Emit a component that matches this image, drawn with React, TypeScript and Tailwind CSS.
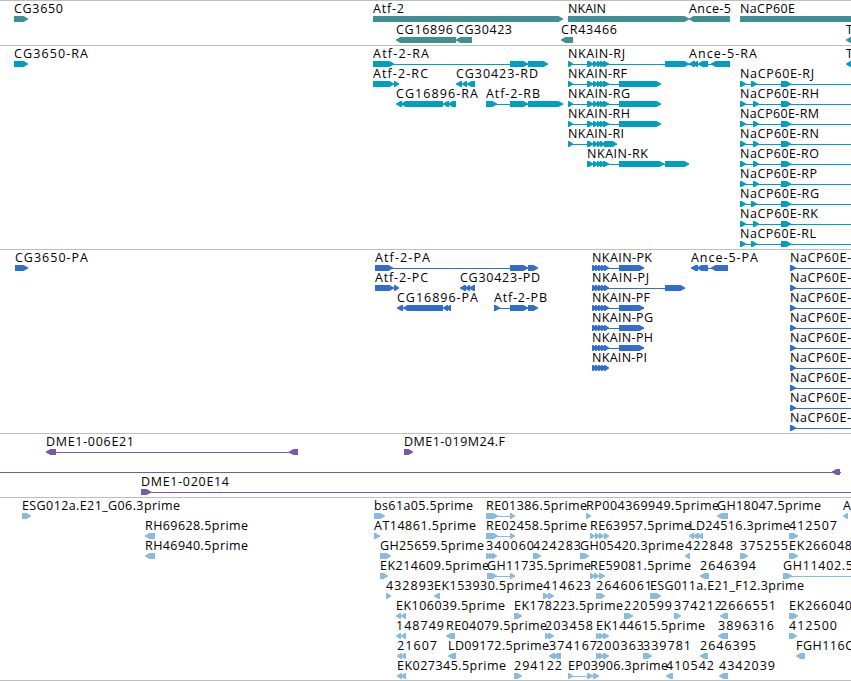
type Part = [start: number, end: number];

type Feature = {
  row: number;
  name?: string;
  textEnd?: number;
  reverse?: boolean;
  parts: Part[];
  // thin connector drawn behind the parts
  line?: Part;
};

type Track = {
  id: string;
  height: number;
  pitch: number;
  color: string;
  features: Feature[];
};

const VIEW_END = 851;
const TIP = 4.5;

const fwd = (row: number, name: string, textEnd: number, parts: Part[], line?: Part): Feature => ({
  row,
  name,
  textEnd,
  parts,
  line,
});

const rev = (row: number, name: string, textEnd: number, parts: Part[], line?: Part): Feature => ({
  row,
  name,
  textEnd,
  parts,
  line,
  reverse: true,
});

const genes: Feature[] = [
  fwd(0, "CG3650", 63, [[14, 28]]),
  fwd(0, "Atf-2", 404, [[373, 563]]),
  fwd(0, "NKAIN", 606, [[568, 689]]),
  rev(0, "Ance-5", 731, [[689, 730]]),
  fwd(0, "NaCP60E", 795, [[740, 870]]),
  rev(1, "CG16896", 453, [[396, 456]]),
  rev(1, "CG30423", 512, [[456, 472]]),
  rev(1, "CR43466", 617, [[561, 573]]),
  rev(1, "T", 853, [[846, 870]]),
];

// shared short exons of the NKAIN transcripts
const nkainExons: Part[] = [[587, 593.5], [593, 598.5], [597, 602], [600, 605], [603, 609]];

const nacpTranscripts: [string, number, number][] = [
  ["NaCP60E-RJ", 814, 751],
  ["NaCP60E-RH", 819, 753],
  ["NaCP60E-RM", 819, 753],
  ["NaCP60E-RN", 819, 753],
  ["NaCP60E-RO", 819, 753],
  ["NaCP60E-RP", 817, 753],
  ["NaCP60E-RG", 819, 751],
  ["NaCP60E-RK", 818, 753],
  ["NaCP60E-RL", 816, 751],
];

const transcripts: Feature[] = [
  fwd(0, "CG3650-RA", 88, [[14, 28]]),
  fwd(0, "Atf-2-RA", 429, [[373, 394], [510, 528], [528, 548]], [373, 548]),
  fwd(0, "NKAIN-RJ", 625, [[568, 573], ...nkainExons, [665, 689]], [568, 689]),
  rev(0, "Ance-5-RA", 757, [[689, 695], [693, 698], [698, 708], [711, 730]], [689, 730]),
  rev(0, "T", 853, [[846, 870]]),
  fwd(1, "Atf-2-RC", 428, [[373, 394], [394, 399]], [373, 399]),
  rev(1, "CG30423-RD", 538, [[456, 462], [462, 467], [467, 475]]),
  fwd(1, "NKAIN-RF", 627, [[568, 573], ...nkainExons, [619, 661]], [568, 661]),
  rev(2, "CG16896-RA", 478, [[396, 402], [401, 443], [443, 449], [448, 456]]),
  fwd(2, "Atf-2-RB", 540, [[486, 497], [510, 528], [528, 563]], [486, 563]),
  fwd(2, "NKAIN-RG", 630, [[568, 573], ...nkainExons, [619, 661]], [568, 661]),
  fwd(3, "NKAIN-RH", 630, [[568, 573], ...nkainExons, [619, 661]], [568, 661]),
  fwd(4, "NKAIN-RI", 624, [[568, 573], ...nkainExons.slice(0, 4), [604, 617]], [568, 617]),
  fwd(5, "NKAIN-RK", 648, [...nkainExons, [619, 664], [665, 689]], [587, 689]),
  ...nacpTranscripts.map(([name, textEnd, exon], i) =>
    fwd(i + 1, name, textEnd, [[740, 746], [exon, exon + 6], [781, 791]], [740, VIEW_END])
  ),
];

const nkainCds: Part[] = [[592, 597], [595, 600], [598, 603], [601, 606], [604, 609]];

const proteins: Feature[] = [
  fwd(0, "CG3650-PA", 88, [[15, 28]]),
  fwd(0, "Atf-2-PA", 430, [[375, 393], [510, 528], [528, 538]], [375, 538]),
  fwd(0, "NKAIN-PK", 652, [...nkainCds, [619, 644]], [592, 644]),
  rev(0, "Ance-5-PA", 758, [[691, 698], [697, 708], [711, 728]], [691, 728]),
  fwd(1, "Atf-2-PC", 428, [[375, 394], [394, 399]]),
  rev(1, "CG30423-PD", 540, [[460, 466], [465, 470], [469, 475]]),
  fwd(1, "NKAIN-PJ", 649, [...nkainCds, [665, 685]], [592, 685]),
  rev(2, "CG16896-PA", 478, [[397, 403], [403, 443], [443, 448], [446, 451]]),
  fwd(2, "Atf-2-PB", 547, [[494, 500], [510, 528], [528, 538]], [494, 538]),
  fwd(2, "NKAIN-PF", 650, [...nkainCds, [619, 644]], [592, 644]),
  fwd(3, "NKAIN-PG", 653, [...nkainCds, [619, 644]], [592, 644]),
  fwd(4, "NKAIN-PH", 653, [...nkainCds, [619, 644]], [592, 644]),
  fwd(5, "NKAIN-PI", 647, nkainCds),
  ...Array.from({ length: 9 }, (_, i) => fwd(i, "NaCP60E-", 851, [[790, 796]], [790, VIEW_END])),
];

const clones: Feature[] = [
  rev(0, "DME1-006E21", 134, [[46, 56], [289, 298]], [46, 298]),
  fwd(0, "DME1-019M24.F", 505, [[404, 413]]),
  { row: 1, parts: [[832, 840]], line: [0, 841], reverse: true },
  fwd(2, "DME1-020E14", 229, [[141, 151]], [141, VIEW_END]),
];

const ests: Feature[] = [
  fwd(0, "ESG012a.E21_G06.3prime", 180, [[22, 31]]),
  fwd(0, "bs61a05.5prime", 473, [[374, 385]]),
  fwd(0, "RE01386.5prime", 587, [[486, 498], [510, 515]], [486, 515]),
  fwd(0, "RP004369949.5prime", 719, [[586, 591]]),
  rev(0, "GH18047.5prime", 821, [[717, 728]]),
  rev(0, "A", 852, [[843, 848]]),

  rev(1, "RH69628.5prime", 248, [[145, 155]]),
  fwd(1, "AT14861.5prime", 476, [[374, 380]]),
  fwd(1, "RE02458.5prime", 587, [[486, 498], [510, 515]], [486, 515]),
  fwd(1, "RE63957.5prime", 691, [[590, 595], [595, 600], [599, 604], [604, 609]]),
  rev(1, "LD24516.3prime", 790, [[689, 694], [693, 699], [698, 703]]),
  fwd(1, "412507", 837, [[789, 798]]),

  rev(2, "RH46940.5prime", 248, [[145, 155]]),
  fwd(2, "GH25659.5prime", 484, [[380, 391]]),
  fwd(2, "340060", 534, [[486, 491], [489, 494], [492, 497]]),
  fwd(2, "424283", 581, [[533, 541]]),
  fwd(2, "GH05420.3prime", 684, [[580, 589]]),
  rev(2, "422848", 733, [[685, 690]]),
  fwd(2, "375255", 788, [[740, 748]]),
  fwd(2, "EK266048", 852, [[789, 798]]),

  fwd(3, "EK214609.5prime", 489, [[380, 388]]),
  fwd(3, "GH11735.5prime", 591, [[487, 497], [510, 515]], [487, 515]),
  fwd(3, "RE59081.5prime", 691, [[590, 595], [594, 599], [599, 605]]),
  rev(3, "2646394", 756, [[700, 709]]),
  fwd(3, "GH11402.5", 853, [[783, 792]], [783, VIEW_END]),

  fwd(4, "432893", 434, [[386, 391]]),
  rev(4, "EK153930.5prime", 543, [[434, 440]]),
  fwd(4, "414623", 591, [[543, 549], [548, 554]]),
  fwd(4, "2646061", 652, [[596, 601], [598, 603], [600, 605]]),
  fwd(4, "ESG011a.E21_F12.3prime", 804, [[650, 661]]),

  rev(5, "EK106039.5prime", 505, [[396, 401], [401, 406]]),
  fwd(5, "EK178223.5prime", 623, [[514, 522]]),
  fwd(5, "220599", 672, [[624, 633]]),
  fwd(5, "374212", 722, [[674, 681]]),
  rev(5, "2666551", 776, [[720, 728]]),
  fwd(5, "EK266040", 852, [[789, 798]]),

  rev(6, "148749", 444, [[396, 401], [401, 406]]),
  rev(6, "RE04079.5prime", 547, [[446, 455]]),
  fwd(6, "203458", 593, [[545, 550], [548, 554]]),
  fwd(6, "EK144615.5prime", 705, [[596, 601], [599, 604], [603, 609]]),
  rev(6, "3896316", 774, [[718, 728]]),
  fwd(6, "412500", 837, [[789, 797]]),

  rev(7, "21607", 437, [[397, 402], [401, 406]]),
  rev(7, "LD09172.5prime", 549, [[448, 456]]),
  rev(7, "374167", 597, [[549, 555], [553, 561]]),
  fwd(7, "200363", 644, [[596, 601], [599, 604], [603, 609]]),
  fwd(7, "339781", 691, [[643, 652]]),
  rev(7, "2646395", 756, [[700, 708]]),
  rev(7, "FGH116C", 853, [[796, 805]]),

  rev(8, "EK027345.5prime", 506, [[397, 402], [401, 406]]),
  fwd(8, "294122", 562, [[514, 522]]),
  fwd(8, "EP03906.3prime", 668, [[568, 573], [587, 593], [593, 599]], [568, 599]),
  rev(8, "410542", 714, [[666, 673]]),
  rev(8, "4342039", 775, [[719, 728]]),
];

const tracks: Track[] = [
  { id: "genes", height: 44, pitch: 21, color: "#408f94", features: genes },
  { id: "transcripts", height: 203, pitch: 20, color: "#009fbf", features: transcripts },
  { id: "proteins", height: 183, pitch: 20, color: "#316dce", features: proteins },
  { id: "clones", height: 63, pitch: 20, color: "#7858a8", features: clones },
  { id: "ests", height: 182, pitch: 20, color: "#88bbdd", features: ests },
];

function arrow([start, end]: Part, reverse?: boolean) {
  const tip = Math.min(TIP, end - start - 1);
  if (reverse) {
    return `${end},15 ${start + tip},15 ${start},17.4 ${start},18.6 ${start + tip},21 ${end},21`;
  }
  return `${start},15 ${end - tip},15 ${end},17.4 ${end},18.6 ${end - tip},21 ${start},21`;
}

function FeatureGlyph({ feature, pitch }: { feature: Feature; pitch: number }) {
  const { row, name, textEnd = 0, parts, line, reverse } = feature;
  // labels start at the left edge of their feature
  const x = parts[0][0];
  return (
    <g transform={`translate(0 ${row * pitch})`}>
      {name && (
        <text x={x} y={12} textLength={textEnd - x} className="fill-black">
          {name}
        </text>
      )}
      {line && <rect x={line[0]} y={18} width={line[1] - line[0]} height={1} />}
      {parts.map((part) => (
        <polygon key={part[0]} points={arrow(part, reverse)} />
      ))}
    </g>
  );
}

export default function App() {
  return (
    <main className="flex w-[851px] flex-col overflow-hidden border-b border-[#bebebe] bg-white font-['Open_Sans','Noto_Sans',sans-serif] text-[12.5px]">
      {tracks.map((track) => (
        <section key={track.id} className="border-t border-[#bebebe]">
          <svg width={VIEW_END} height={track.height} fill={track.color} className="block">
            {track.features.map((feature, idx) => (
              <FeatureGlyph key={idx} feature={feature} pitch={track.pitch} />
            ))}
          </svg>
        </section>
      ))}
    </main>
  );
}
